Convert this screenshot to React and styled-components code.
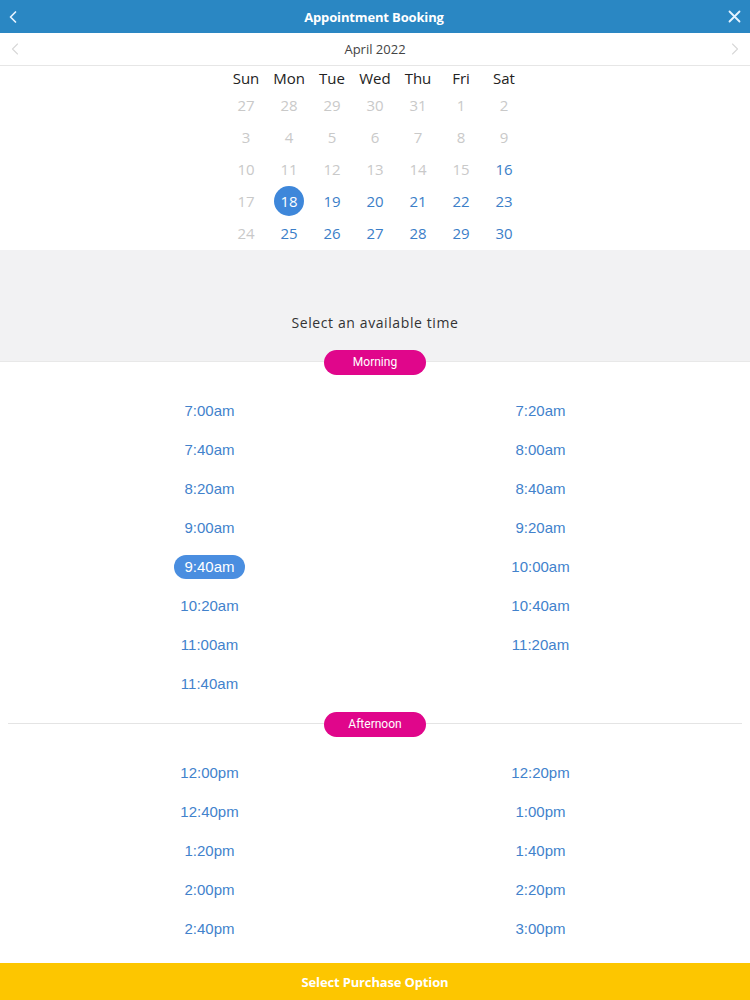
import React from "react";
import styled, { createGlobalStyle } from "styled-components";

const Global = createGlobalStyle`
  html, body { margin: 0; padding: 0; background: #fff; }
  body { font-family: "Open Sans", "Liberation Sans", sans-serif; }
  * { box-sizing: border-box; }
`;

const Page = styled.div`
  width: 750px;
  padding-bottom: 40px;
`;

const Header = styled.header`
  height: 33px;
  background: #2a87c3;
  display: flex;
  align-items: center;
  justify-content: space-between;
  padding: 0 8px 0 6px;
  color: #fff;
`;

const Title = styled.h1`
  margin: 0;
  font-size: 13px;
  font-weight: 700;
  letter-spacing: -0.15px;
`;

const IconBtn = styled.span`
  width: 14px;
  height: 14px;
  display: flex;
  align-items: center;
  justify-content: center;
  color: ${(p) => p.$color || "#e6f3ff"};
`;

const MonthBar = styled.div`
  height: 33px;
  border-bottom: 1px solid #e6e6e6;
  display: flex;
  align-items: center;
  justify-content: space-between;
  padding: 0 8px;
`;

const MonthLabel = styled.div`
  font-size: 13px;
  color: #444;
`;

const Calendar = styled.div`
  width: 301px;
  margin: 0 auto;
  display: grid;
  grid-template-columns: repeat(7, 43px);
  grid-template-rows: 23px;
  grid-auto-rows: 32px;
  padding-bottom: 1px;
`;

const WeekDay = styled.div`
  display: flex;
  align-items: center;
  justify-content: center;
  font-size: 15px;
  color: #222;
`;

const DayCell = styled.div`
  display: flex;
  align-items: center;
  justify-content: center;
`;

const Day = styled.span`
  width: 30px;
  height: 30px;
  border-radius: 50%;
  display: flex;
  align-items: center;
  justify-content: center;
  font-size: 15px;
  color: ${(p) => (p.$selected ? "#fff" : p.$available ? "#3b7ec8" : "#c9c9c9")};
  background: ${(p) => (p.$selected ? "#3e87da" : "transparent")};
`;

const Prompt = styled.div`
  background: #f2f2f3;
  height: 112px;
  display: flex;
  align-items: flex-end;
  justify-content: center;
  padding-bottom: 30px;
  font-size: 14px;
  letter-spacing: 0.6px;
  color: #333;
`;

const Divider = styled.div`
  height: 26px;
  margin-top: ${(p) => (p.$overlap ? "-13px" : "0")};
  display: flex;
  justify-content: center;
  align-items: center;
  background: ${(p) =>
    p.$line
      ? "linear-gradient(to bottom, transparent 12px, #e4e4e4 12px, #e4e4e4 13px, transparent 13px) no-repeat 8px 0 / 734px 26px"
      : "linear-gradient(to bottom, transparent 12px, #e8e8e8 12px, #e8e8e8 13px, #fff 13px)"};
`;

const Pill = styled.span`
  width: 102px;
  height: 25px;
  border-radius: 13px;
  background: #e0068b;
  color: #fff;
  font-family: Roboto, "Liberation Sans", sans-serif;
  font-size: 12px;
  display: flex;
  align-items: center;
  justify-content: center;
`;

const Times = styled.div`
  display: grid;
  grid-template-columns: 1fr 1fr;
  grid-auto-rows: 39px;
  padding: 16px 44px 8px;
`;

const TimeCell = styled.div`
  display: flex;
  align-items: center;
  justify-content: center;
`;

const Time = styled.span`
  height: 24px;
  padding: 0 10px;
  border-radius: 12px;
  display: flex;
  align-items: center;
  font-family: "Liberation Sans", Arial, sans-serif;
  font-size: 15px;
  color: ${(p) => (p.$selected ? "#fff" : "#4282cc")};
  background: ${(p) => (p.$selected ? "#4a8ee0" : "transparent")};
`;

const Footer = styled.footer`
  position: fixed;
  left: 0;
  right: 0;
  bottom: 0;
  height: 37px;
  background: #fdc600;
  color: #fff;
  display: flex;
  align-items: center;
  justify-content: center;
  font-size: 13px;
  font-weight: 700;
  letter-spacing: -0.15px;
`;

const Chevron = ({ dir = "left", size = 14, width = 1.6 }) => (
  <svg width={size} height={size} viewBox="0 0 14 14" fill="none">
    <path
      d={dir === "left" ? "M9.5 2 L4.5 7 L9.5 12" : "M4.5 2 L9.5 7 L4.5 12"}
      stroke="currentColor"
      strokeWidth={width}
      strokeLinecap="round"
      strokeLinejoin="round"
    />
  </svg>
);

const Close = () => (
  <svg width="13" height="13" viewBox="0 0 13 13" fill="none">
    <path d="M1.5 1.5 L11.5 11.5 M11.5 1.5 L1.5 11.5" stroke="currentColor" strokeWidth="1.8" strokeLinecap="round" />
  </svg>
);

const weekdays = ["Sun", "Mon", "Tue", "Wed", "Thu", "Fri", "Sat"];
const days = [
  27, 28, 29, 30, 31, 1, 2,
  3, 4, 5, 6, 7, 8, 9,
  10, 11, 12, 13, 14, 15, 16,
  17, 18, 19, 20, 21, 22, 23,
  24, 25, 26, 27, 28, 29, 30,
];

const morning = [
  "7:00am", "7:20am", "7:40am", "8:00am", "8:20am", "8:40am", "9:00am", "9:20am",
  "9:40am", "10:00am", "10:20am", "10:40am", "11:00am", "11:20am", "11:40am",
];
const afternoon = [
  "12:00pm", "12:20pm", "12:40pm", "1:00pm", "1:20pm", "1:40pm", "2:00pm", "2:20pm",
  "2:40pm", "3:00pm", "3:20pm", "3:40pm", "4:00pm", "4:20pm",
];

export default function App() {
  return (
    <Page>
      <Global />
      <Header>
        <IconBtn><Chevron dir="left" size={14} width={1.7} /></IconBtn>
        <Title>Appointment Booking</Title>
        <IconBtn><Close /></IconBtn>
      </Header>
      <MonthBar>
        <IconBtn $color="#d8d8d8"><Chevron dir="left" width={1.1} /></IconBtn>
        <MonthLabel>April 2022</MonthLabel>
        <IconBtn $color="#d8d8d8"><Chevron dir="right" width={1.1} /></IconBtn>
      </MonthBar>
      <Calendar>
        {weekdays.map((w) => (
          <WeekDay key={w}>{w}</WeekDay>
        ))}
        {days.map((d, i) => {
          const available = i >= 20 && i !== 21 && i !== 28;
          return (
            <DayCell key={i}>
              <Day $available={available} $selected={i === 22}>{d}</Day>
            </DayCell>
          );
        })}
      </Calendar>
      <Prompt>Select an available time</Prompt>
      <Divider $overlap>
        <Pill>Morning</Pill>
      </Divider>
      <Times>
        {morning.map((t) => (
          <TimeCell key={t}>
            <Time $selected={t === "9:40am"}>{t}</Time>
          </TimeCell>
        ))}
      </Times>
      <Divider $line>
        <Pill>Afternoon</Pill>
      </Divider>
      <Times>
        {afternoon.map((t) => (
          <TimeCell key={t}>
            <Time>{t}</Time>
          </TimeCell>
        ))}
      </Times>
      <Footer>Select Purchase Option</Footer>
    </Page>
  );
}
